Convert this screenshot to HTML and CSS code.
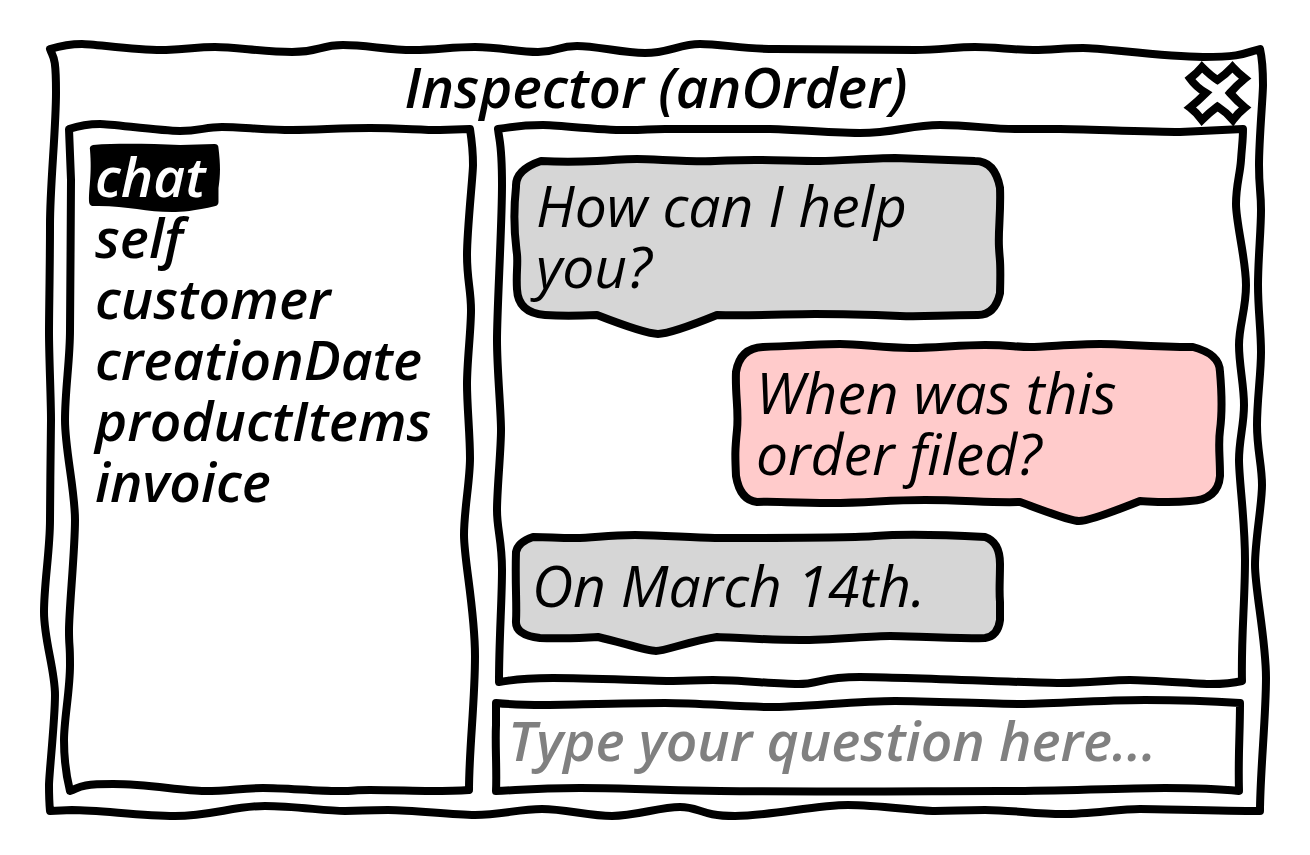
FILE: index.html
```html
<!DOCTYPE html>
<html lang="en">
<head>
<meta charset="utf-8">
<title>Inspector (anOrder)</title>
<meta name="viewport" content="width=device-width, initial-scale=1">
<link rel="stylesheet" href="styles.css">
</head>
<body>
<main class="window">
  <svg class="sketch" viewBox="50 48 1212 764" preserveAspectRatio="none" aria-hidden="true">
    <path d="M50 49C60 46 70 44 82 44S140 51 166 50S195 47 215 47S265 52 292 52S320 45 343 45S388 50 413 50S450 47 475 47S518 52 538 52S557 46 577 46S622 53 645 53S680 44 700 44S745 49 775 49S890 50 915 50S955 47 975 47S1013 50 1033 50S1063 48 1083 48S1163 57 1203 57S1245 53 1260 49C1263 62 1263 75 1263 85S1259 140 1259 165S1261 190 1261 210S1258 260 1258 285S1261 330 1261 352S1257 400 1257 425S1262 465 1262 485S1255 540 1255 565S1266 640 1266 678S1260 775 1260 811C1220 811 1160 809 1140 809S1090 814 1063 814S1010 810 985 810S955 811 935 811S880 805 848 805S770 816 735 816S700 807 680 807S635 816 612 816S565 809 542 809S500 815 475 815S415 810 388 810S365 811 345 811S295 806 265 806S210 816 175 816S100 810 72 810L50 811C49 800 49 795 49 785S55 720 55 695S44 640 44 612S50 550 50 520S51 440 51 420S49 355 49 333S50 265 50 225S56 130 56 92S53 58 50 49Z"/>
  </svg>
  <header class="titlebar">
    <h1 class="title">Inspector (anOrder)</h1>
    <button class="close" type="button" aria-label="Close">
      <svg class="close-icon" viewBox="1183 59 69 69" aria-hidden="true">
        <path d="M1202 67Q1211 76 1217.500 80Q1225 75 1232.500 67Q1238 73 1245 78.500Q1237 85 1230 93Q1237 101 1245 107.500Q1238 113 1233 120Q1226 112 1217.500 106.500Q1210 112 1202 120Q1196 112 1190 107.500Q1198 101 1206 93Q1196 87 1190 78.500Q1197 73 1202 67Z"/>
      </svg>
    </button>
  </header>
  <div class="panes">
    <nav class="pane fields" aria-label="Fields">
      <svg class="sketch" viewBox="70 129 400 662" preserveAspectRatio="none" aria-hidden="true">
        <path d="M69 129C78 126 88 124 100 124S160 131 180 131S205 127 222 127S267 130 292 130S340 128 370 128S420 130 440 130L470 129C472 142 473 155 473 165S467 230 467 255S471 290 471 310S467 362 467 384S470 435 470 458S464 510 464 535S475 610 475 656S469 750 469 790C455 791 445 791 430 791S390 790 370 790S360 791 338 791S285 788 263 788S230 791 205 791S150 784 113 784S80 788 70 791C66 775 64 760 64 740S70 690 70 665S69 650 69 630S75 550 75 520S65 450 65 420S70 360 70 330S71 220 71 180Z"/>
      </svg>
      <ul class="field-list">
        <li><button class="field selected" type="button" aria-current="true">
          <svg class="marker" viewBox="90 145 129 61" preserveAspectRatio="none" aria-hidden="true"><path d="M93 145C120 143 150 144 180 145L214 144Q218 144 218 148C220 165 220 175 218 188L218 202Q218 205 215 206C195 211 180 212 172 212C145 212 125 205 92 206Q89 205 89 201C89 185 92 175 90 150Q89 146 93 145Z"/></svg>
          <span class="field-name">chat</span></button></li>
        <li><button class="field" type="button">self</button></li>
        <li><button class="field" type="button">customer</button></li>
        <li><button class="field" type="button">creationDate</button></li>
        <li><button class="field" type="button">productItems</button></li>
        <li><button class="field" type="button">invoice</button></li>
      </ul>
    </nav>
    <section class="conversation" aria-label="Chat">
      <div class="pane messages">
        <svg class="sketch" viewBox="498 129 744 554" preserveAspectRatio="none" aria-hidden="true">
          <path d="M498 129C515 126 530 125 543 125S600 130 625 130S645 129 665 129S750 129 770 129S825 133 860 133S910 125 940 125S990 129 1015 129S1040 129 1060 129S1150 132 1180 132L1243 129C1243 140 1242 145 1241 160S1236 185 1236 204S1246 260 1246 285S1239 325 1239 345S1244 385 1244 405S1239 440 1239 460S1245 520 1245 560S1241 640 1242 681C1230 684 1220 684 1210 684S1150 680 1130 680S1090 683 1060 683S900 677 860 677S820 684 798 684S740 680 713 680S695 681 673 681S590 678 553 678S515 680 499 682C499 640 502 600 502 570S497 530 497 510S501 450 501 430S497 370 497 340S502 225 502 185S500 145 498 129Z"/>
        </svg>
        <div class="bubble reply">
          <svg class="sketch" viewBox="516 160 486 156" preserveAspectRatio="none" aria-hidden="true">
            <path d="M541 161C560 162 575 162 597 161S620 159 637 159S690 162 715 161S735 160 755 160S800 161 820 161S870 158 895 158L975 161Q995 161 1000 188C1001 215 998 230 999 248S1001 260 1000 294Q995 316 978 316C940 316 925 318 900 317S840 315 815 315S750 317 717 316C695 325 670 335 658 335S620 325 597 316C575 317 560 317 545 316Q518 314 517 290C516 275 518 265 517 255S512 225 516 187Q515 170 541 161Z"/>
          </svg>
          <p class="bubble-text">How can I help<br>you?</p>
        </div>
        <div class="bubble question">
          <svg class="sketch" viewBox="736 347 486 155" preserveAspectRatio="none" aria-hidden="true">
            <path d="M763 347C795 346 820 344 840 344S885 348 910 348S960 345 985 345S1015 347 1030 347S1075 344 1100 344S1150 347 1193 347Q1220 354 1220 372C1222 395 1222 415 1220 430S1220 455 1220 476Q1218 500 1190 501C1170 503 1160 502 1140 501C1115 511 1088 521 1079 521S1048 512 1020 502C990 503 965 500 925 500S870 503 830 503S775 501 757 502Q740 500 736 476C735 455 735 450 737 430S735 395 736 372Q740 348 763 347Z"/>
          </svg>
          <p class="bubble-text">When was this<br>order filed?</p>
        </div>
        <div class="bubble reply short">
          <svg class="sketch" viewBox="516 537 486 103" preserveAspectRatio="none" aria-hidden="true">
            <path d="M533 537C550 537 555 538 575 538S605 535 635 535S690 538 715 538S850 538 875 536S930 534 985 537Q1000 542 1000 564C1000 580 999 590 1000 602L1000 620Q998 636 985 638C950 639 910 636 890 636S830 640 800 640S740 638 717 637C690 641 665 651 656 651S620 642 598 637C575 638 560 639 540 638Q515 635 516 621C517 605 515 585 516 552Q518 542 533 537Z"/>
          </svg>
          <p class="bubble-text">On March 14th.</p>
        </div>
      </div>
      <form class="pane ask">
        <svg class="sketch" viewBox="498 704 744 87" preserveAspectRatio="none" aria-hidden="true">
          <path d="M496 703C515 705 530 705 545 705S630 703 665 703S740 707 770 707S860 701 895 701S990 704 1020 704S1100 700 1145 700S1210 701 1240 703C1240 735 1238 755 1239 791C1220 789 1200 788 1165 788S1060 791 1000 791S800 792 720 791S625 788 580 788S520 790 496 791C497 770 495 745 496 725Z"/>
        </svg>
        <input class="ask-input" type="text" name="question" placeholder="Type your question here..." aria-label="Type your question here">
      </form>
    </section>
  </div>
</main>
</body>
</html>
```
FILE: styles.css
```css
* {
  box-sizing: border-box;
}

body {
  margin: 0;
  min-height: 100vh;
  display: flex;
  padding: 48px 48px 43px 50px;
  background: #fff;
  color: #000;
  font-family: "Open Sans", "Noto Sans", sans-serif;
  font-style: italic;
  font-size: 55px;
  font-variant-ligatures: none;
  line-height: 61px;
}

button,
input {
  margin: 0;
  padding: 0;
  border: 0;
  background: none;
  color: inherit;
  font: inherit;
}

/* Hand-drawn outline that stretches with its box */
.sketch,
.marker {
  position: absolute;
  inset: 0;
  width: 100%;
  height: 100%;
  overflow: visible;
  pointer-events: none;
}

.sketch path {
  fill: none;
  stroke: #000;
  stroke-width: 8px;
  stroke-linejoin: round;
  vector-effect: non-scaling-stroke;
}

.window {
  position: relative;
  flex: 1;
  display: flex;
  flex-direction: column;
  padding: 0 20px 21px;
}

.titlebar {
  display: grid;
  grid-template-columns: 1fr auto 1fr;
  align-items: center;
  height: 81px;
  margin-right: -10px;
  margin-left: -10px;
}

.title {
  grid-column: 2;
  margin: 0 0 4px;
  font-size: 56px;
  font-weight: 600;
}

.close {
  justify-self: end;
  width: 69px;
  height: 69px;
  margin-top: 10px;
  cursor: pointer;
}

.close-icon {
  display: block;
  overflow: visible;
}

.close-icon path {
  fill: #fff;
  stroke: #000;
  stroke-width: 8px;
}

.panes {
  flex: 1;
  display: grid;
  grid-template-columns: 400fr 744fr;
  gap: 28px;
}

.pane {
  position: relative;
}

.fields {
  padding: 16px 20px;
}

.field-list {
  margin: 0;
  padding: 0;
  list-style: none;
}

.field {
  position: relative;
  display: block;
  padding: 0 14px 0 5px;
  font-weight: 600;
  cursor: pointer;
}

.field-name {
  position: relative;
}

.selected {
  color: #fff;
}

.marker path {
  fill: #000;
}

.conversation {
  display: flex;
  flex-direction: column;
  gap: 21px;
}

.messages {
  flex: 1;
  display: flex;
  flex-direction: column;
  gap: 32px;
  padding: 31px 20px 37px 18px;
}

.bubble {
  position: relative;
  width: 486px;
  max-width: 100%;
  padding: 15px 20px 18px;
}

.bubble-text {
  position: relative;
  margin: 0;
  font-size: 57px;
}

.reply .sketch path {
  fill: #d6d6d6;
}

.question {
  align-self: flex-end;
}

.question .sketch path {
  fill: #ffcbcb;
}

.short {
  margin-top: 3px;
  padding: 18px 16px 24px;
}

.ask {
  display: flex;
  height: 87px;
  padding: 0 10px;
}

.ask-input {
  position: relative;
  flex: 1;
  min-width: 0;
  height: 71px;
  outline: 0;
  font-weight: 600;
}

.ask-input::placeholder {
  color: #808080;
  opacity: 1;
}
```
